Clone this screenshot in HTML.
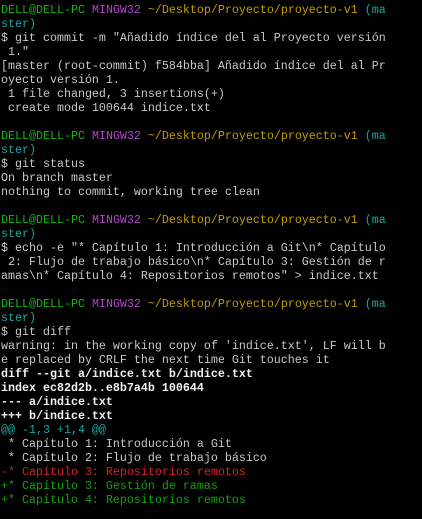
<!DOCTYPE html><html><head><style>
body{margin:0;background:#000;width:422px;height:519px;overflow:hidden}
pre{margin:0;padding:3px 0 0 1px;font-family:"Liberation Mono",monospace;font-size:11.67px;line-height:14px;color:#c8c8c8;white-space:pre}
.g{color:#16b50e}.m{color:#b148c6}.y{color:#c19c00}.c{color:#1aa79e}.r{color:#d3202c}.dg{color:#13a10e}.b{color:#f2f2f2;font-weight:bold}.cy{color:#1aa79e}
</style></head><body><pre><span class="g">DELL@DELL-PC</span> <span class="m">MINGW32</span> <span class="y">~/Desktop/Proyecto/proyecto-v1</span> <span class="c">(ma
ster)</span>
$ git commit -m "Añadido índice del al Proyecto versión
 1."
[master (root-commit) f584bba] Añadido índice del al Pr
oyecto versión 1.
 1 file changed, 3 insertions(+)
 create mode 100644 indice.txt

<span class="g">DELL@DELL-PC</span> <span class="m">MINGW32</span> <span class="y">~/Desktop/Proyecto/proyecto-v1</span> <span class="c">(ma
ster)</span>
$ git status
On branch master
nothing to commit, working tree clean

<span class="g">DELL@DELL-PC</span> <span class="m">MINGW32</span> <span class="y">~/Desktop/Proyecto/proyecto-v1</span> <span class="c">(ma
ster)</span>
$ echo -e "* Capítulo 1: Introducción a Git\n* Capítulo
 2: Flujo de trabajo básico\n* Capítulo 3: Gestión de r
amas\n* Capítulo 4: Repositorios remotos" &gt; indice.txt

<span class="g">DELL@DELL-PC</span> <span class="m">MINGW32</span> <span class="y">~/Desktop/Proyecto/proyecto-v1</span> <span class="c">(ma
ster)</span>
$ git diff
warning: in the working copy of 'indice.txt', LF will b
e replaced by CRLF the next time Git touches it
<span class="b">diff --git a/indice.txt b/indice.txt
index ec82d2b..e8b7a4b 100644
--- a/indice.txt
+++ b/indice.txt</span>
<span class="cy">@@ -1,3 +1,4 @@</span>
 * Capítulo 1: Introducción a Git
 * Capítulo 2: Flujo de trabajo básico
<span class="r">-* Capítulo 3: Repositorios remotos</span>
<span class="dg">+* Capítulo 3: Gestión de ramas</span>
<span class="dg">+* Capítulo 4: Repositorios remotos</span></pre></body></html>
